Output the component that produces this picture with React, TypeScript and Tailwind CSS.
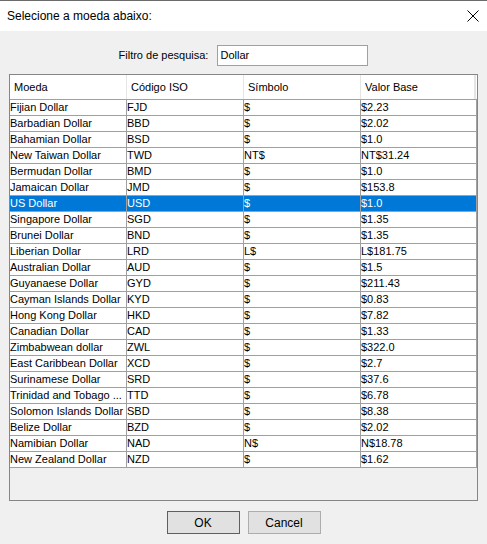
import React from "react";

const rows: [string, string, string, string][] = [
  ["Fijian Dollar", "FJD", "$", "$2.23"],
  ["Barbadian Dollar", "BBD", "$", "$2.02"],
  ["Bahamian Dollar", "BSD", "$", "$1.0"],
  ["New Taiwan Dollar", "TWD", "NT$", "NT$31.24"],
  ["Bermudan Dollar", "BMD", "$", "$1.0"],
  ["Jamaican Dollar", "JMD", "$", "$153.8"],
  ["US Dollar", "USD", "$", "$1.0"],
  ["Singapore Dollar", "SGD", "$", "$1.35"],
  ["Brunei Dollar", "BND", "$", "$1.35"],
  ["Liberian Dollar", "LRD", "L$", "L$181.75"],
  ["Australian Dollar", "AUD", "$", "$1.5"],
  ["Guyanaese Dollar", "GYD", "$", "$211.43"],
  ["Cayman Islands Dollar", "KYD", "$", "$0.83"],
  ["Hong Kong Dollar", "HKD", "$", "$7.82"],
  ["Canadian Dollar", "CAD", "$", "$1.33"],
  ["Zimbabwean dollar", "ZWL", "$", "$322.0"],
  ["East Caribbean Dollar", "XCD", "$", "$2.7"],
  ["Surinamese Dollar", "SRD", "$", "$37.6"],
  ["Trinidad and Tobago ...", "TTD", "$", "$6.78"],
  ["Solomon Islands Dollar", "SBD", "$", "$8.38"],
  ["Belize Dollar", "BZD", "$", "$2.02"],
  ["Namibian Dollar", "NAD", "N$", "N$18.78"],
  ["New Zealand Dollar", "NZD", "$", "$1.62"],
];

const font = { fontFamily: '"Liberation Sans", Arial, sans-serif' };

export default function App() {
  return (
    <div
      className="w-[487px] h-[544px] flex flex-col bg-[#f0f0f0] text-black border-t border-[#6b6b6b] overflow-hidden"
      style={font}
    >
      <div className="h-[30px] bg-white flex items-center justify-between pl-[7px] pr-[8px] shrink-0">
        <span className="text-[12px]">Selecione a moeda abaixo:</span>
        <svg width="12" height="12" viewBox="0 0 12 12" className="mr-[0px]">
          <path d="M0.5 0.5 L11.5 11.5 M11.5 0.5 L0.5 11.5" stroke="#000" strokeWidth="1" />
        </svg>
      </div>
      <div className="flex flex-col flex-1 pt-[14px] px-[9px] pb-[10px]">
        <div className="flex items-center justify-center gap-[9px]">
          <span className="text-[11px]">Filtro de pesquisa:</span>
          <div className="w-[151px] h-[21px] bg-white border border-[#a0a0a0] flex items-center pl-[2px] text-[11px]">
            Dollar
          </div>
        </div>
        <div className="mt-[8px] h-[427px] border border-[#868686] bg-[#f0f0f0] flex flex-col text-[11px]">
          <div className="h-[25px] bg-white border-b border-[#a0a0a0] flex shrink-0">
            {["Moeda", "Código ISO", "Símbolo", "Valor Base"].map((h, i) => (
              <div
                key={h}
                className={
                  i < 3
                    ? "w-[117px] border-r border-[#e5e5e5] flex items-center pl-[4px]"
                    : "flex-1 border-r-2 border-[#e5e5e5] flex items-center pl-[4px] mr-[1px]"
                }
              >
                {h}
              </div>
            ))}
          </div>
          {rows.map((r) => {
            const sel = r[1] === "USD";
            return (
              <div
                key={r[1]}
                className={
                  sel
                    ? "h-[16px] flex border-b border-[#a0a0a0] bg-[#0078d7] text-white shrink-0"
                    : "h-[16px] flex border-b border-[#a0a0a0] bg-white shrink-0"
                }
              >
                {r.map((c, i) => (
                  <div
                    key={i}
                    className={
                      i < 3
                        ? "w-[117px] border-r border-[#a0a0a0] flex items-center whitespace-nowrap overflow-hidden leading-none"
                        : "flex-1 border-r border-[#a0a0a0] flex items-center whitespace-nowrap overflow-hidden leading-none"
                    }
                  >
                    {c}
                  </div>
                ))}
              </div>
            );
          })}
        </div>
        <div className="mt-[10px] flex justify-center gap-[8px] text-[12px]">
          <button className="w-[73px] h-[23px] bg-[#e1e1e1] border border-[#0078d7] flex items-center justify-center">
            OK
          </button>
          <button className="w-[73px] h-[23px] bg-[#e1e1e1] border border-[#adadad] flex items-center justify-center">
            Cancel
          </button>
        </div>
      </div>
    </div>
  );
}
